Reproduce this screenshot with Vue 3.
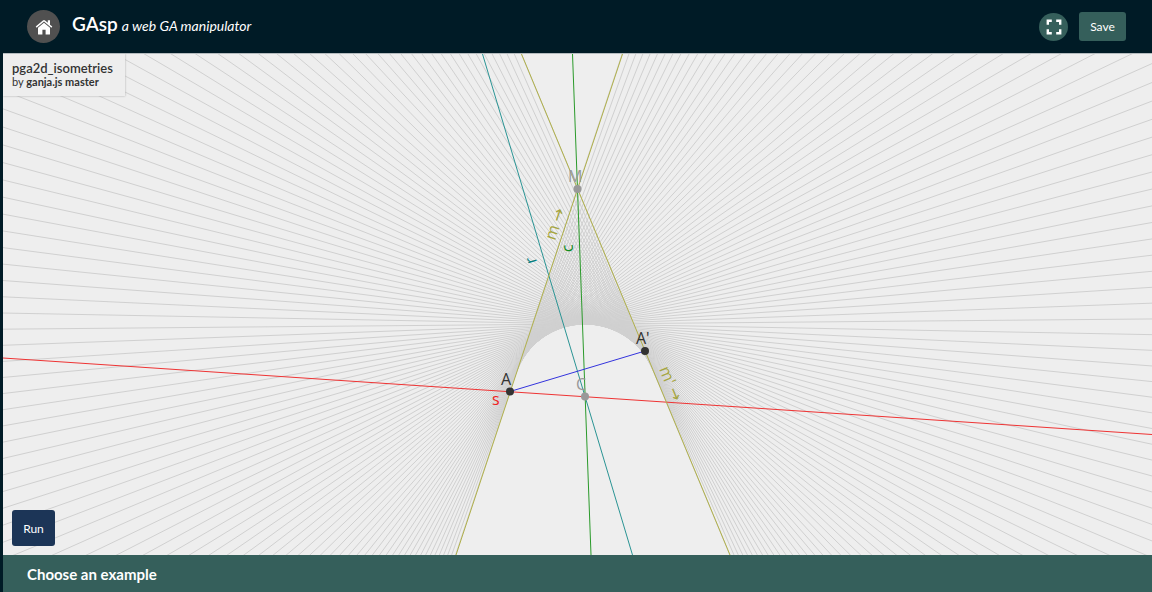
<script setup>
const center = { x: 582, y: 343 }
const radius = 73
const startAngle = 161.6
const endAngle = 22.6
const reach = 2000
const steps = 100

const toRad = (deg) => (deg * Math.PI) / 180

// Normalised linear blend between the identity and the full rotation.
const rotationAt = (t) => {
  const half = toRad((startAngle - endAngle) / 2)
  return 2 * Math.atan2(t * Math.sin(half), 1 - t + t * Math.cos(half))
}

const tangents = Array.from({ length: steps + 1 }, (_, i) => {
  const angle = toRad(startAngle) - rotationAt(i / steps)
  const nx = Math.cos(angle)
  const ny = -Math.sin(angle)
  const fx = center.x + radius * nx
  const fy = center.y + radius * ny
  return {
    id: i,
    x1: fx - reach * ny,
    y1: fy + reach * nx,
    x2: fx + reach * ny,
    y2: fy - reach * nx,
  }
})
</script>

<template>
  <div class="app">
    <header class="header">
      <a class="home" href="#" aria-label="Home">
        <svg viewBox="0 0 18 16" width="18" height="16" aria-hidden="true">
          <path d="M9 3.8 3 8.8V15a.6.6 0 0 0 .6.6h3.8v-4.8h3.2v4.8h3.8a.6.6 0 0 0 .6-.6V8.8z" />
          <path d="M17.3 7.6 15 5.7V1.3h-2.2v2.5L10.1 1.5a1.7 1.7 0 0 0-2.2 0L.7 7.6l.9 1.1L9 2.6l7.4 6.1z" />
        </svg>
      </a>
      <h1 class="title">GAsp <em>a web GA manipulator</em></h1>
      <div class="actions">
        <button class="full" type="button" aria-label="Full screen">
          <svg viewBox="0 0 16 16" width="16" height="16" aria-hidden="true">
            <path d="M1.8 5.8V1.8h4M10.2 1.8h4v4M14.2 10.2v4h-4M5.8 14.2h-4v-4" />
          </svg>
        </button>
        <button class="save" type="button">Save</button>
      </div>
    </header>

    <main class="stage">
      <svg class="graph" viewBox="0 0 1149 501" preserveAspectRatio="xMidYMid slice" role="img" aria-label="Isometries in the plane">
        <g class="tangents">
          <line v-for="l in tangents" :key="l.id" :x1="l.x1" :y1="l.y1" :x2="l.x2" :y2="l.y2" />
        </g>
        <line class="red" x1="0" y1="304" x2="1149" y2="380.5" />
        <line class="teal" x1="479.5" y1="0" x2="629.5" y2="501" />
        <line class="green" x1="569.5" y1="0" x2="588" y2="501" />
        <line class="olive" x1="619.5" y1="0" x2="453" y2="501" />
        <line class="olive" x1="518.5" y1="0" x2="727" y2="501" />
        <line class="blue" x1="507" y1="337.5" x2="642" y2="297" />
        <circle class="dark" cx="507" cy="337.5" r="4" />
        <circle class="dark" cx="642" cy="297" r="4" />
        <circle class="gray" cx="574.5" cy="135" r="4" />
        <circle class="gray" cx="582" cy="342.5" r="4" />
        <text class="dark" x="498" y="331">A</text>
        <text class="dark" x="633" y="290">A'</text>
        <text class="gray" x="565" y="128">M</text>
        <text class="gray" x="573" y="336">C</text>
        <text class="red" x="489" y="351">s</text>
        <text class="olive" transform="translate(552 187) rotate(-71.6)">m →</text>
        <text class="olive" transform="translate(656 315) rotate(67.4)">m' →</text>
        <text class="green" transform="translate(570 198) rotate(-92)">c</text>
        <text class="teal" transform="translate(534 208) rotate(-106.7)">r</text>
      </svg>
      <section class="info">
        <h2>pga2d_isometries</h2>
        <p>by <strong>ganja.js master</strong></p>
      </section>
      <button class="run" type="button">Run</button>
    </main>

    <footer class="footer"><h2>Choose an example</h2></footer>
  </div>
</template>

<style>
body {
  margin: 0;
  background: #001b26;
}
</style>

<style scoped>
.app {
  display: flex;
  flex-direction: column;
  min-height: 100vh;
  box-sizing: border-box;
  padding-left: 3px;
  background: #001b26;
  font-family: Lato, "Liberation Sans", sans-serif;
}
.header {
  display: flex;
  align-items: center;
  height: 53px;
  padding: 0 26px 0 24px;
  color: #fff;
}
.home {
  display: flex;
  align-items: center;
  justify-content: center;
  width: 33px;
  height: 33px;
  border-radius: 50%;
  background: #505050;
}
.home svg {
  fill: #fff;
}
.title {
  display: flex;
  align-items: baseline;
  gap: 4px;
  margin: 0 0 4px 12px;
  font-size: 19px;
  line-height: 24px;
  font-weight: 600;
}
.title em {
  font-size: 14px;
  font-weight: 400;
}
.actions {
  display: flex;
  align-items: center;
  gap: 11px;
  margin-left: auto;
}
button {
  border: 0;
  padding: 0;
  color: #fff;
  font-family: inherit;
  font-size: 12px;
  cursor: pointer;
}
.full {
  display: flex;
  align-items: center;
  justify-content: center;
  width: 29px;
  height: 28px;
  border-radius: 50%;
  background: #355f5b;
}
.full path {
  fill: none;
  stroke: #fff;
  stroke-width: 2.4;
}
.save {
  width: 47px;
  height: 29px;
  border-radius: 3px;
  background: #355f5b;
}
.stage {
  position: relative;
  flex: 1;
  display: flex;
  flex-direction: column;
  align-items: flex-start;
  justify-content: space-between;
  overflow: hidden;
  border-top: 1px solid #b5bcbf;
  background: #eee;
}
.graph {
  position: absolute;
  inset: 0;
  width: 100%;
  height: 100%;
}
.graph line {
  stroke-width: 1;
}
.graph text {
  font-family: "Open Sans", "DejaVu Sans", sans-serif;
  font-size: 16px;
}
.tangents line {
  stroke: #d0d0d0;
}
line.red { stroke: #e33; }
line.teal { stroke: #2a9494; }
line.green { stroke: #2a9a2a; }
line.olive { stroke: #b0b04a; }
line.blue { stroke: #33d; }
text.red { fill: #e22; }
text.teal { fill: #088080; }
text.green { fill: #108a20; }
text.olive { fill: #a5a540; }
.dark { fill: #333; }
.gray { fill: #999; }
.info {
  position: relative;
  padding: 6px 12px 8px 9px;
  background: #eee;
  box-shadow: 0 0 2px #aaa;
  color: #333;
}
.info h2 {
  margin: 0;
  font-size: 13px;
  font-weight: 600;
  line-height: 16px;
}
.info p {
  margin: 0;
  font-size: 11px;
  line-height: 12px;
}
.run {
  position: relative;
  width: 43px;
  height: 36px;
  margin: 0 0 9px 9px;
  border-radius: 3px;
  background: #1c3557;
}
.footer {
  height: 37px;
  padding-left: 24px;
  background: #355f5b;
  color: #fff;
}
.footer h2 {
  margin: 0;
  font-size: 15px;
  line-height: 38px;
}
</style>
